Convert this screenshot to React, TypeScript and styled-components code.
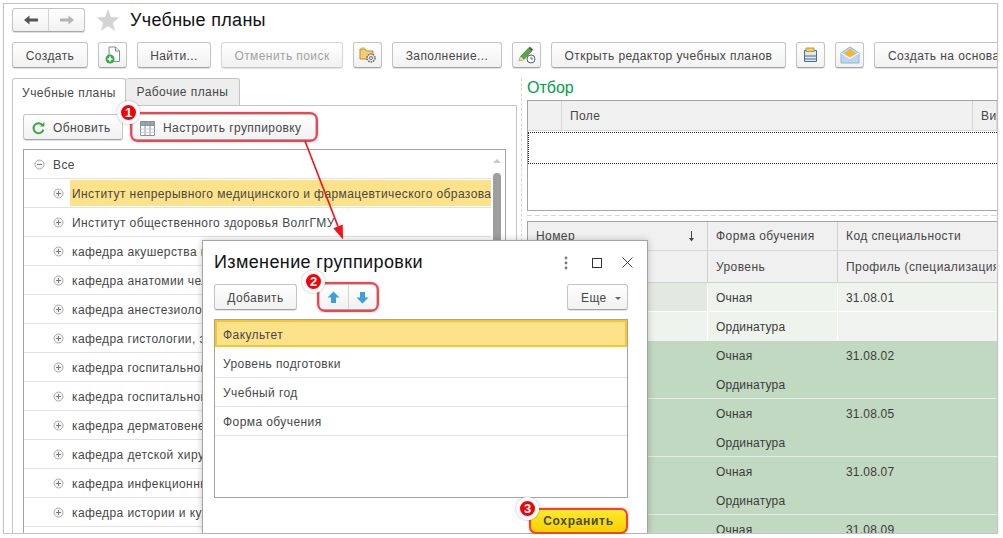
import React from "react";
import styled, { createGlobalStyle } from "styled-components";

const GlobalStyle = createGlobalStyle`
  html, body {
    margin: 0;
    background: #fff;
    font-family: "Liberation Sans", Arial, sans-serif;
    font-size: 12px;
    color: #474747;
  }
  * { box-sizing: border-box; }
`;

const Frame = styled.div`
  position: relative;
  display: flex;
  flex-direction: column;
  width: 995px;
  height: 531px;
  margin: 3px 0 0 3px;
  border: 1px solid #c4c4c4;
  box-shadow: 0 1px 2px rgba(0, 0, 0, 0.1);
`;

const Header = styled.div`
  display: flex;
  align-items: center;
  height: 28px;
  padding: 4px 0 0 8px;
  flex: none;
`;

const NavGroup = styled.div`
  display: flex;
  width: 73px;
  height: 24px;
  border: 1px solid #c4c4c4;
  border-bottom-color: #a8a8a8;
  border-radius: 3px;
  background: linear-gradient(#fff, #f1f1f1);
  box-shadow: 0 1px 1px rgba(0, 0, 0, 0.15);
`;

const NavCell = styled.div<{ $divided?: boolean }>`
  flex: 1;
  display: flex;
  align-items: center;
  justify-content: center;
  border-left: ${({ $divided }) => ($divided ? "1px solid #d4d4d4" : "none")};
`;

const StarBox = styled.div`
  display: flex;
  margin-left: 11px;
`;

const Title = styled.div`
  margin-left: 10px;
  padding-top: 1px;
  font-size: 18px;
  letter-spacing: 0.3px;
  color: #111;
  white-space: nowrap;
`;

const Toolbar = styled.div`
  display: flex;
  gap: 10px;
  flex: none;
  overflow: hidden;
  height: 28px;
  margin-top: 10px;
  padding-left: 8px;
`;

const Button = styled.div<{ $w: number; $off?: boolean }>`
  display: flex;
  align-items: center;
  justify-content: center;
  gap: 7px;
  flex: none;
  width: ${({ $w }) => $w}px;
  height: 26px;
  padding-top: 2px;
  border: 1px solid ${({ $off }) => ($off ? "#d8d8d8" : "#c4c4c4")};
  border-bottom-color: ${({ $off }) => ($off ? "#c8c8c8" : "#a4a4a4")};
  border-radius: 3px;
  background: linear-gradient(#fff, #f1f1f1);
  box-shadow: 0 1px 1px rgba(0, 0, 0, 0.12);
  color: ${({ $off }) => ($off ? "#a2a2a2" : "#474747")};
  letter-spacing: 0.42px;
  white-space: nowrap;
`;

const IconButton = styled(Button)`
  padding-top: 0;
`;

const LeadButton = styled(Button)<{ $pad: number; $gap: number }>`
  justify-content: flex-start;
  padding-left: ${({ $pad }) => $pad}px;
  gap: ${({ $gap }) => $gap}px;
`;

const Workspace = styled.div`
  display: flex;
  flex: 1;
  min-height: 0;
  margin-top: 8px;
  padding-left: 8px;
`;

const LeftPane = styled.div`
  display: flex;
  flex-direction: column;
  flex: none;
  width: 505px;
`;

const Tabs = styled.div`
  display: flex;
  height: 27px;
  flex: none;
`;

const Tab = styled.div<{ $active?: boolean }>`
  display: flex;
  align-items: center;
  justify-content: center;
  width: 114px;
  border: 1px solid #c4c4c4;
  border-bottom: none;
  border-left: ${({ $active }) => ($active ? "1px solid #c4c4c4" : "none")};
  border-radius: 3px 3px 0 0;
  background: ${({ $active }) => ($active ? "#fff" : "#eeeeee")};
  letter-spacing: 0.45px;
  position: relative;
  margin-bottom: ${({ $active }) => ($active ? "-1px" : "0")};
`;

const Panel = styled.div`
  display: flex;
  flex-direction: column;
  flex: 1;
  min-height: 0;
  border: 1px solid #c4c4c4;
  border-bottom: none;
  padding: 8px 10px 0;
`;

const PanelToolbar = styled.div`
  display: flex;
  gap: 9px;
  flex: none;
  height: 26px;
  margin-bottom: 9px;
`;

const Highlight = styled.div`
  position: relative;
  flex: none;
  height: 26px;

  &::after {
    content: "";
    position: absolute;
    inset: -2px;
    border: 2px solid #ee4550;
    border-radius: 8px;
    box-shadow: 0 0 2px rgba(238, 69, 80, 0.5);
    pointer-events: none;
  }
`;

const Badge = styled.div<{ $left: number; $top: number }>`
  position: absolute;
  z-index: 3;
  left: ${({ $left }) => $left}px;
  top: ${({ $top }) => $top}px;
  display: flex;
  align-items: center;
  justify-content: center;
  width: 23px;
  height: 23px;
  border: 4px solid #fff;
  border-radius: 50%;
  background: #f40009;
  box-shadow: 0 0 2px rgba(0, 0, 0, 0.35);
  color: #fff;
  font-size: 13px;
  font-weight: 700;
  letter-spacing: 0;
`;

const Tree = styled.div`
  display: flex;
  flex: 1;
  min-height: 0;
  overflow: hidden;
  border: 1px solid #a4a4a4;
  border-bottom: none;
`;

const TreeRows = styled.div`
  flex: 1;
  min-width: 0;
`;

const TreeRow = styled.div<{ $level: number }>`
  display: flex;
  align-items: center;
  gap: 6px;
  height: 29px;
  padding-left: ${({ $level }) => ($level === 0 ? 10 : 29)}px;
  border-bottom: 1px solid #e2e2e2;
`;

const TreeLabel = styled.div<{ $selected?: boolean }>`
  flex: 1;
  min-width: 0;
  display: flex;
  align-items: center;
  height: 26px;
  padding: 2px 0 0 2px;
  overflow: hidden;
  background: ${({ $selected }) => ($selected ? "#fde28a" : "transparent")};
  letter-spacing: 0.41px;
  white-space: nowrap;
`;

const Scroll = styled.div`
  display: flex;
  flex-direction: column;
  align-items: center;
  flex: none;
  width: 14px;
  padding: 9px 3px 0 0;
`;

const ScrollUp = styled.div`
  width: 0;
  height: 0;
  border-left: 4px solid transparent;
  border-right: 4px solid transparent;
  border-bottom: 4px solid #c8c8c8;
`;

const ScrollThumb = styled.div`
  width: 8px;
  height: 300px;
  margin-top: 10px;
  border-radius: 4px 4px 0 0;
  background: #9e9e9e;
`;

const Splitter = styled.div`
  flex: none;
  width: 10px;
  margin-left: 4px;
  margin-right: -4px;
  border-left: 1px dashed #d4d4d4;
`;

const RightPane = styled.div`
  display: flex;
  flex-direction: column;
  flex: 1;
  min-width: 0;
  overflow: hidden;
`;

const GroupTitle = styled.div`
  display: flex;
  align-items: center;
  flex: none;
  height: 22px;
  padding-bottom: 2px;
  color: #00a04a;
  font-size: 16px;
`;

const FilterTable = styled.div`
  flex: none;
  height: 111px;
  border: 1px solid #a4a4a4;
  border-right: none;
`;

const FilterHead = styled.div`
  display: grid;
  grid-template-columns: 34px 411px 1fr;
  height: 30px;
  background: #f0f0f0;
`;

const HeadCell = styled.div`
  display: flex;
  align-items: center;
  padding-left: 8px;
  border-right: 1px solid #d8d8d8;
  border-bottom: 1px solid #d8d8d8;
  letter-spacing: 0.4px;
  white-space: nowrap;
  overflow: hidden;
`;

const FilterFocus = styled.div`
  height: 32px;
  margin-top: 1px;
  border-top: 1px dotted #222;
  border-left: 1px dotted #222;
  border-bottom: 1px dotted #222;
`;

const DashedGap = styled.div`
  flex: none;
  height: 10px;
  background: repeating-linear-gradient(90deg, #d4d4d4 0 5px, #fff 5px 8px) 0 4px / 100% 1px no-repeat;
`;

const ListTable = styled.div`
  flex: 1;
  min-height: 0;
  overflow: hidden;
  border-top: 1px solid #a4a4a4;
  border-left: 1px solid #a4a4a4;
`;

const Row = styled.div<{ $h: number; $bg?: string; $line?: string }>`
  display: grid;
  grid-template-columns: 180px 130px 1fr;
  height: ${({ $h }) => $h}px;
  background: ${({ $bg }) => $bg || "transparent"};
  border-bottom: 1px solid ${({ $line }) => $line || "transparent"};
`;

const Cell = styled.div<{ $sep?: string; $bg?: string }>`
  display: flex;
  align-items: center;
  justify-content: space-between;
  padding: 0 12px 0 8px;
  background: ${({ $bg }) => $bg || "transparent"};
  border-right: 1px solid ${({ $sep }) => $sep || "transparent"};
  letter-spacing: 0.42px;
  white-space: nowrap;
  overflow: hidden;
`;

const PlainCell = styled(Cell)`
  padding-top: 2px;
  letter-spacing: 0.2px;
  color: #3c3c3c;
`;

const Modal = styled.div`
  position: absolute;
  z-index: 2;
  left: 198px;
  top: 236px;
  bottom: 0;
  width: 446px;
  display: flex;
  flex-direction: column;
  padding: 0 19px 0 11px;
  background: #fff;
  border: 1px solid #a4a4a4;
  border-bottom: none;
  box-shadow: 0 0 7px rgba(0, 0, 0, 0.22);
`;

const ModalHead = styled.div`
  display: flex;
  align-items: center;
  justify-content: space-between;
  flex: none;
  height: 43px;
`;

const ModalTitle = styled.div`
  font-size: 18px;
  letter-spacing: 0.38px;
  color: #111;
  white-space: nowrap;
`;

const ModalActions = styled.div`
  display: flex;
  align-items: center;
  gap: 20px;
  margin-right: -5px;
`;

const KebabBox = styled.div`
  display: flex;
  margin-right: 4px;
`;

const ModalToolbar = styled.div`
  display: flex;
  align-items: center;
  justify-content: space-between;
  flex: none;
  height: 26px;
`;

const ToolGroup = styled.div`
  display: flex;
  gap: 22px;
`;

const ArrowGroup = styled.div`
  display: flex;
  width: 58px;
  height: 26px;
  border: 1px solid #c4c4c4;
  border-bottom-color: #a4a4a4;
  border-radius: 3px;
  background: linear-gradient(#fff, #f1f1f1);
`;

const Caret = styled.span`
  width: 0;
  height: 0;
  border-left: 3.5px solid transparent;
  border-right: 3.5px solid transparent;
  border-top: 3px solid #666;
`;

const List = styled.div`
  flex: none;
  height: 179px;
  margin-top: 9px;
  border: 1px solid #a4a4a4;
`;

const ListRow = styled.div<{ $selected?: boolean }>`
  display: flex;
  align-items: center;
  height: ${({ $selected }) => ($selected ? 27 : 29)}px;
  margin-bottom: ${({ $selected }) => ($selected ? 2 : 0)}px;
  padding: 2px 0 0 ${({ $selected }) => ($selected ? 6 : 8)}px;
  background: ${({ $selected }) => ($selected ? "#fde28a" : "transparent")};
  border: ${({ $selected }) => ($selected ? "2px solid #fac42c" : "none")};
  border-bottom: ${({ $selected }) => ($selected ? "2px solid #fac42c" : "1px solid #e2e2e2")};
  letter-spacing: 0.42px;
`;

const ModalFooter = styled.div`
  display: flex;
  justify-content: flex-end;
  flex: none;
  margin-top: 10px;
`;

const SaveButton = styled.div`
  position: relative;
  display: flex;
  align-items: center;
  justify-content: center;
  width: 99px;
  height: 26px;
  border: 2px solid #f0452c;
  border-radius: 7px;
  background: linear-gradient(#ffe92e, #f7d000);
  box-shadow: 0 0 2px rgba(240, 69, 44, 0.6);
  color: #4a4a2c;
  font-weight: 700;
  letter-spacing: 0.7px;
`;

const ArrowLayer = styled.svg`
  position: absolute;
  z-index: 2;
  left: 296px;
  top: 134px;
  pointer-events: none;
`;

const NavArrow = ({ left, color }: { left?: boolean; color: string }) => (
  <svg width="16" height="12" viewBox="0 0 16 12">
    <g transform={left ? undefined : "translate(16 0) scale(-1 1)"}>
      <path d="M1 6 L6.5 1.5 V4.5 H15 V7.5 H6.5 V10.5 Z" fill={color} />
    </g>
  </svg>
);

const Star = () => (
  <svg width="24" height="24" viewBox="0 0 24 24">
    <path d="M12 1 L15 9 L23.5 9.4 L16.8 14.7 L19.1 23 L12 18.3 L4.9 23 L7.2 14.7 L0.5 9.4 L9 9 Z" fill="#d4d4d4" />
  </svg>
);

const NewDocIcon = () => (
  <svg width="16" height="18" viewBox="0 0 16 18">
    <path d="M4 1 H10.5 L14.5 5 V15.5 H4 Z" fill="#fff" stroke="#7f8c99" />
    <path d="M10.5 1 V5 H14.5" fill="#dfe5ea" stroke="#7f8c99" />
    <circle cx="5" cy="13" r="4.5" fill="#36a84a" />
    <path d="M5 10.5 V15.5 M2.5 13 H7.5" stroke="#fff" strokeWidth="1.6" />
  </svg>
);

const FolderGearIcon = () => (
  <svg width="18" height="18" viewBox="0 0 18 18">
    <path d="M1 3 H6 L7.5 5 H14 V13 H1 Z" fill="#f5cf6e" stroke="#b58f35" />
    <path d="M2.5 1.5 H6 V3 H2.5 Z" fill="#e7b955" />
    <circle cx="12" cy="12" r="4" fill="#e8e8e8" stroke="#707070" strokeWidth="1.6" strokeDasharray="1.6 0.9" />
    <circle cx="12" cy="12" r="1.5" fill="#fff" stroke="#707070" />
  </svg>
);

const PencilClockIcon = () => (
  <svg width="18" height="18" viewBox="0 0 18 18">
    <path d="M1 15 L2.5 10.5 L10.5 2 L14 5 L6 13.5 Z" fill="#5aa445" stroke="#3b7a2d" strokeWidth="0.6" />
    <path d="M10.5 2 L12 0.8 L15 3.6 L14 5 Z" fill="#505050" />
    <path d="M1 15 L2.5 10.5 L6 13.5 Z" fill="#f0d9a8" />
    <circle cx="13" cy="13" r="4" fill="#fff" stroke="#566470" />
    <path d="M13 10.8 V13 H15" fill="none" stroke="#566470" />
  </svg>
);

const SaveListIcon = () => (
  <svg width="16" height="16" viewBox="0 0 16 16">
    <path d="M1.5 3.5 H13.5 V14.5 H1.5 Z" fill="#dfe7f0" stroke="#4c6a8c" />
    <path d="M3 1 H11 V4.5 H3 Z" fill="#f7d154" stroke="#a8892b" strokeWidth="0.8" />
    <path d="M1.5 9 H13.5 M1.5 12 H13.5" stroke="#4c6a8c" />
  </svg>
);

const MailIcon = () => (
  <svg width="20" height="18" viewBox="0 0 20 18">
    <path d="M1 7 L10 1 L19 7 V17 H1 Z" fill="#b9d7f0" stroke="#8fb4d6" />
    <path d="M4 7.5 L10 3 L16 7.5 L10 11 Z" fill="#f6b81c" />
    <path d="M1 7 L10 12.5 L19 7" fill="none" stroke="#fff" />
  </svg>
);

const RefreshIcon = () => (
  <svg width="13" height="13" viewBox="0 0 13 13">
    <path d="M10.6 3.2 A5 5 0 1 0 11.4 7.6" fill="none" stroke="#3da53d" strokeWidth="2" />
    <path d="M8 4.4 H12.4 V0 Z" fill="#3da53d" />
  </svg>
);

const GroupingIcon = () => (
  <svg width="15" height="15" viewBox="0 0 15 15">
    <path d="M0.5 4.5 H14.5 V14.5 H0.5 Z" fill="#fff" stroke="#8a9199" />
    <path d="M0.5 0.5 H14.5 V4.5 H0.5 Z" fill="#9aa4ad" stroke="#8a9199" />
    <path d="M5 0.5 V14.5 M10 0.5 V14.5" stroke="#8a9199" />
    <path d="M0.5 8 H14.5 M0.5 11.5 H14.5" stroke="#c9ced3" />
  </svg>
);

const BlockArrow = ({ down }: { down?: boolean }) => (
  <svg width="13" height="13" viewBox="0 0 13 13">
    <path
      d={down ? "M4 1 H9 V6.5 H12.5 L6.5 12.5 L0.5 6.5 H4 Z" : "M6.5 0.5 L12.5 6.5 H9 V12 H4 V6.5 H0.5 Z"}
      fill="#3f9fdc"
    />
  </svg>
);

const TreeToggle = ({ open }: { open?: boolean }) => (
  <svg width="11" height="11" viewBox="0 0 11 11" style={{ flex: "none" }}>
    <circle cx="5.5" cy="5.5" r="4.5" fill="#f4f4f4" stroke="#a8a8a8" />
    <path d={open ? "M3 5.5 H8" : "M3 5.5 H8 M5.5 3 V8"} stroke="#7a7a7a" />
  </svg>
);

const Kebab = () => (
  <svg width="4" height="14" viewBox="0 0 4 14">
    <circle cx="2" cy="2" r="1.4" fill="#777" />
    <circle cx="2" cy="7" r="1.4" fill="#777" />
    <circle cx="2" cy="12" r="1.4" fill="#777" />
  </svg>
);

const Maximize = () => (
  <svg width="10" height="10" viewBox="0 0 10 10">
    <rect x="0.5" y="0.5" width="9" height="9" fill="none" stroke="#333" />
  </svg>
);

const CloseIcon = () => (
  <svg width="11" height="11" viewBox="0 0 11 11">
    <path d="M0.5 0.5 L10.5 10.5 M10.5 0.5 L0.5 10.5" stroke="#444" />
  </svg>
);

const SortArrow = () => (
  <svg width="7" height="11" viewBox="0 0 7 11">
    <path d="M3.5 0 V9" stroke="#444" />
    <path d="M1 7 H6 L3.5 10.5 Z" fill="#444" />
  </svg>
);

const TREE_ITEMS = [
  "Институт непрерывного медицинского и фармацевтического образова",
  "Институт общественного здоровья ВолгГМУ",
  "кафедра акушерства и гинекологии",
  "кафедра анатомии человека",
  "кафедра анестезиологии и реаниматологии",
  "кафедра гистологии, эмбриологии, цитологии",
  "кафедра госпитальной педиатрии",
  "кафедра госпитальной терапии",
  "кафедра дерматовенерологии",
  "кафедра детской хирургии",
  "кафедра инфекционных болезней",
  "кафедра истории и культурологии",
  "кафедра клинической психологии",
];

const GROUP_FIELDS = ["Уровень подготовки", "Учебный год", "Форма обучения"];

const PLAN_CODES = ["31.08.02", "31.08.05", "31.08.07", "31.08.09"];

const GREEN = "#c1d9c0";

export default function App() {
  return (
    <>
      <GlobalStyle />
      <Frame>
        <Header>
          <NavGroup>
            <NavCell>
              <NavArrow left color="#555" />
            </NavCell>
            <NavCell $divided>
              <NavArrow color="#b4b4b4" />
            </NavCell>
          </NavGroup>
          <StarBox>
            <Star />
          </StarBox>
          <Title>Учебные планы</Title>
        </Header>

        <Toolbar>
          <Button $w={76}>Создать</Button>
          <IconButton $w={29}>
            <NewDocIcon />
          </IconButton>
          <Button $w={74}>Найти...</Button>
          <Button $w={122} $off>
            Отменить поиск
          </Button>
          <IconButton $w={29}>
            <FolderGearIcon />
          </IconButton>
          <Button $w={110}>Заполнение...</Button>
          <IconButton $w={29}>
            <PencilClockIcon />
          </IconButton>
          <Button $w={235}>Открыть редактор учебных планов</Button>
          <IconButton $w={29}>
            <SaveListIcon />
          </IconButton>
          <IconButton $w={29}>
            <MailIcon />
          </IconButton>
          <LeadButton $w={150} $pad={13} $gap={0}>
            Создать на основании
          </LeadButton>
        </Toolbar>

        <Workspace>
          <LeftPane>
            <Tabs>
              <Tab $active>Учебные планы</Tab>
              <Tab>Рабочие планы</Tab>
            </Tabs>
            <Panel>
              <PanelToolbar>
                <LeadButton $w={100} $pad={8} $gap={8}>
                  <RefreshIcon />
                  Обновить
                </LeadButton>
                <Highlight>
                  <LeadButton $w={184} $pad={7} $gap={8}>
                    <GroupingIcon />
                    Настроить группировку
                  </LeadButton>
                  <Badge $left={-15} $top={-13}>
                    1
                  </Badge>
                </Highlight>
              </PanelToolbar>
              <Tree>
                <TreeRows>
                  <TreeRow $level={0}>
                    <TreeToggle open />
                    <TreeLabel>Все</TreeLabel>
                  </TreeRow>
                  {TREE_ITEMS.map((item, i) => (
                    <TreeRow key={item} $level={1}>
                      <TreeToggle />
                      <TreeLabel $selected={i === 0}>{item}</TreeLabel>
                    </TreeRow>
                  ))}
                </TreeRows>
                <Scroll>
                  <ScrollUp />
                  <ScrollThumb />
                </Scroll>
              </Tree>
            </Panel>
          </LeftPane>

          <Splitter />

          <RightPane>
            <GroupTitle>Отбор</GroupTitle>
            <FilterTable>
              <FilterHead>
                <HeadCell />
                <HeadCell>Поле</HeadCell>
                <HeadCell>Вид сравнения</HeadCell>
              </FilterHead>
              <FilterFocus />
            </FilterTable>
            <DashedGap />
            <ListTable>
              <Row $h={29} $bg="#f0f0f0" $line="#d8d8d8">
                <Cell $sep="#d0d0d0">
                  Номер
                  <SortArrow />
                </Cell>
                <Cell $sep="#d0d0d0">Форма обучения</Cell>
                <Cell>Код специальности</Cell>
              </Row>
              <Row $h={32} $bg="#f0f0f0" $line="#d0d0d0">
                <Cell $sep="#d0d0d0" />
                <Cell $sep="#d0d0d0">Уровень</Cell>
                <Cell>Профиль (специализация)</Cell>
              </Row>
              <Row $h={29} $bg="#f0f0f0" $line="#fff">
                <PlainCell $sep="#fff" $bg="#e3e9e1" />
                <PlainCell $sep="#fff" $bg="#eef4ec">
                  Очная
                </PlainCell>
                <PlainCell $bg="#eff3ee">31.08.01</PlainCell>
              </Row>
              <Row $h={29} $bg="#f0f0f0">
                <PlainCell $sep="#fff" $bg="#eff3ee" />
                <PlainCell $sep="#fff" $bg="#eef4ec">
                  Ординатура
                </PlainCell>
                <PlainCell $bg="#f0f3ef" />
              </Row>
              {PLAN_CODES.map((code) => (
                <React.Fragment key={code}>
                  <Row $h={29} $bg={GREEN}>
                    <PlainCell />
                    <PlainCell>Очная</PlainCell>
                    <PlainCell>{code}</PlainCell>
                  </Row>
                  <Row $h={29} $bg={GREEN} $line="#e6ece6">
                    <PlainCell />
                    <PlainCell>Ординатура</PlainCell>
                    <PlainCell />
                  </Row>
                </React.Fragment>
              ))}
            </ListTable>
          </RightPane>
        </Workspace>

        <ArrowLayer width="60" height="110" viewBox="0 0 60 110">
          <path d="M5 3 L38 88.4" stroke="#f2121c" strokeWidth="1.6" fill="none" />
          <path d="M43 101.5 L33.3 90.2 L42.7 86.6 Z" fill="#f2121c" />
        </ArrowLayer>

        <Modal>
          <ModalHead>
            <ModalTitle>Изменение группировки</ModalTitle>
            <ModalActions>
              <KebabBox>
                <Kebab />
              </KebabBox>
              <Maximize />
              <CloseIcon />
            </ModalActions>
          </ModalHead>
          <ModalToolbar>
            <ToolGroup>
              <Button $w={83}>Добавить</Button>
              <Highlight>
                <ArrowGroup>
                  <NavCell>
                    <BlockArrow />
                  </NavCell>
                  <NavCell $divided>
                    <BlockArrow down />
                  </NavCell>
                </ArrowGroup>
                <Badge $left={-17} $top={-14}>
                  2
                </Badge>
              </Highlight>
            </ToolGroup>
            <LeadButton $w={61} $pad={13} $gap={8}>
              Еще
              <Caret />
            </LeadButton>
          </ModalToolbar>
          <List>
            <ListRow $selected>Факультет</ListRow>
            {GROUP_FIELDS.map((field) => (
              <ListRow key={field}>{field}</ListRow>
            ))}
          </List>
          <ModalFooter>
            <SaveButton>
              Сохранить
              <Badge $left={-15} $top={-13}>
                3
              </Badge>
            </SaveButton>
          </ModalFooter>
        </Modal>
      </Frame>
    </>
  );
}
